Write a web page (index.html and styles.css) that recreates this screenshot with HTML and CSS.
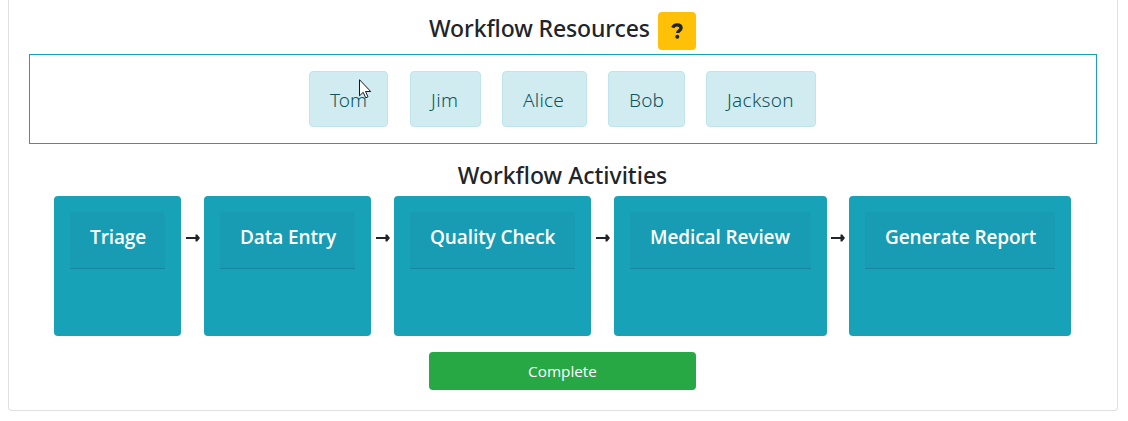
FILE: index.html
```html
<!DOCTYPE html>
<html lang="en">
<head>
<meta charset="utf-8">
<title>Workflow</title>
<link rel="stylesheet" href="styles.css">
</head>
<body>
<main class="panel">
  <header class="resources-head">
    <h4 class="title"><span class="t-resources">Workflow Resources</span></h4>
    <button class="help" aria-label="Help"><svg width="12" height="16" viewBox="0 0 12 16"><path d="M1.7 4.6C2.4 2.9 3.900 1.800 6 1.800c2.400 0 4.100 1.200 4.100 3.200C10.100 7.700 6.700 7.500 6.700 10" fill="none" stroke="#212529" stroke-width="3.300"/><circle cx="6.300" cy="13.700" r="2" fill="#212529"/></svg></button>
  </header>
  <section class="resources">
    <div class="person tom"><span>Tom</span>
      <svg class="cursor" width="13" height="20" viewBox="0 0 13 20"><path d="M.5.7v16.100l3.700-3.500 2.500 5.500 2.300-1-2.500-5.300h5.200z" fill="#fff" stroke="#14142b"/></svg>
    </div>
    <div class="person jim"><span>Jim</span></div>
    <div class="person alice"><span>Alice</span></div>
    <div class="person bob"><span>Bob</span></div>
    <div class="person jackson"><span>Jackson</span></div>
  </section>
  <h4 class="title activities-title"><span class="t-activities">Workflow Activities</span></h4>
  <section class="activities">
    <div class="activity triage"><div class="activity-head"><span>Triage</span></div></div>
    <svg class="arrow" width="14" height="8" viewBox="0 0 14 8"><path d="M0 3h9.500V.5h1.700L14 4l-2.800 3.500H9.500V5H0z"/></svg>
    <div class="activity entry"><div class="activity-head"><span>Data Entry</span></div></div>
    <svg class="arrow" width="14" height="8" viewBox="0 0 14 8"><path d="M0 3h9.500V.5h1.700L14 4l-2.800 3.500H9.500V5H0z"/></svg>
    <div class="activity quality"><div class="activity-head"><span>Quality Check</span></div></div>
    <svg class="arrow" width="14" height="8" viewBox="0 0 14 8"><path d="M0 3h9.500V.5h1.700L14 4l-2.800 3.500H9.500V5H0z"/></svg>
    <div class="activity medical"><div class="activity-head"><span>Medical Review</span></div></div>
    <svg class="arrow" width="14" height="8" viewBox="0 0 14 8"><path d="M0 3h9.500V.5h1.700L14 4l-2.800 3.500H9.500V5H0z"/></svg>
    <div class="activity report"><div class="activity-head"><span>Generate Report</span></div></div>
  </section>
  <button class="complete"><span>Complete</span></button>
</main>
</body>
</html>
```
FILE: styles.css
```css
* { box-sizing: border-box; }
body {
  margin: 0;
  background: #fff;
  color: #212529;
  font-family: "Open Sans", "Noto Sans", sans-serif;
}
.panel {
  width: 1110px;
  height: 411px;
  margin-left: 8px;
  padding: 12px 20px 20px;
  border: 1px solid #dfdfdf;
  border-top: 0;
  border-radius: 0 0 4px 4px;
}
.title {
  margin: 0;
  font-family: "Noto Sans", "Open Sans", sans-serif;
  font-size: 23px;
  font-weight: 500;
  line-height: 29px;
  white-space: nowrap;
}
.t-resources { letter-spacing: -0.1px; }
.resources-head {
  display: flex;
  width: 267px;
  height: 42px;
  margin-left: 400px;
  justify-content: space-between;
}
.resources-head .title { padding-top: 2px; }
.help {
  display: flex;
  width: 38px;
  height: 38px;
  padding: 0;
  border: 0;
  border-radius: 4px;
  background: #ffc107;
  align-items: center;
  justify-content: center;
}
.resources {
  display: flex;
  height: 90px;
  padding: 16px 0 16px 279px;
  border: 1px solid #17a2b8;
  gap: 21px;
}
.person {
  position: relative;
  display: flex;
  height: 56px;
  border: 1px solid #bee5eb;
  border-radius: 4px;
  background: #d1ecf1;
  color: #0c5460;
  font-family: "Noto Sans", "Open Sans", sans-serif;
  font-size: 19px;
  font-weight: 300;
  line-height: 56px;
  padding-left: 20px;
  white-space: nowrap;
}
.tom { width: 79px; margin-right: 1px; }
.jim { width: 71px; letter-spacing: 0.4px; }
.alice { width: 85px; letter-spacing: 0.2px; }
.bob { width: 77px; letter-spacing: 0.2px; }
.jackson { width: 110px; letter-spacing: 0.3px; }
.cursor { position: absolute; left: 49px; top: 7px; }
.activities-title {
  height: 36px;
  margin-top: 16px;
  padding-top: 1px;
  padding-right: 1px;
  text-align: center;
}
.activities { display: flex; height: 140px; padding-left: 25px; }
.activity {
  flex: none;
  padding: 16px;
  border-radius: 4px;
  background: #17a2b8;
}
.activity-head {
  height: 57px;
  padding-left: 20px;
  border-bottom: 1px solid #1488a0;
  border-radius: 4px 4px 0 0;
  background: #179cb3;
  color: #fff;
  font-size: 19px;
  font-weight: 600;
  letter-spacing: -0.1px;
  line-height: 50px;
  white-space: nowrap;
}
.triage { width: 127px; }
.entry { width: 167px; }
.quality { width: 197px; }
.medical { width: 213px; }
.report { width: 222px; }
.arrow { flex: none; margin: 38px 4px 0 5px; fill: #212529; }
.medical + .arrow { margin-left: 4px; }
.complete {
  display: block;
  width: 267px;
  height: 38px;
  margin: 16px 0 0 400px;
  padding: 0;
  border: 0;
  border-radius: 4px;
  background: #28a745;
  color: #fff;
  font: 400 15.300px/38px "Open Sans", "Noto Sans", sans-serif;
}
```
